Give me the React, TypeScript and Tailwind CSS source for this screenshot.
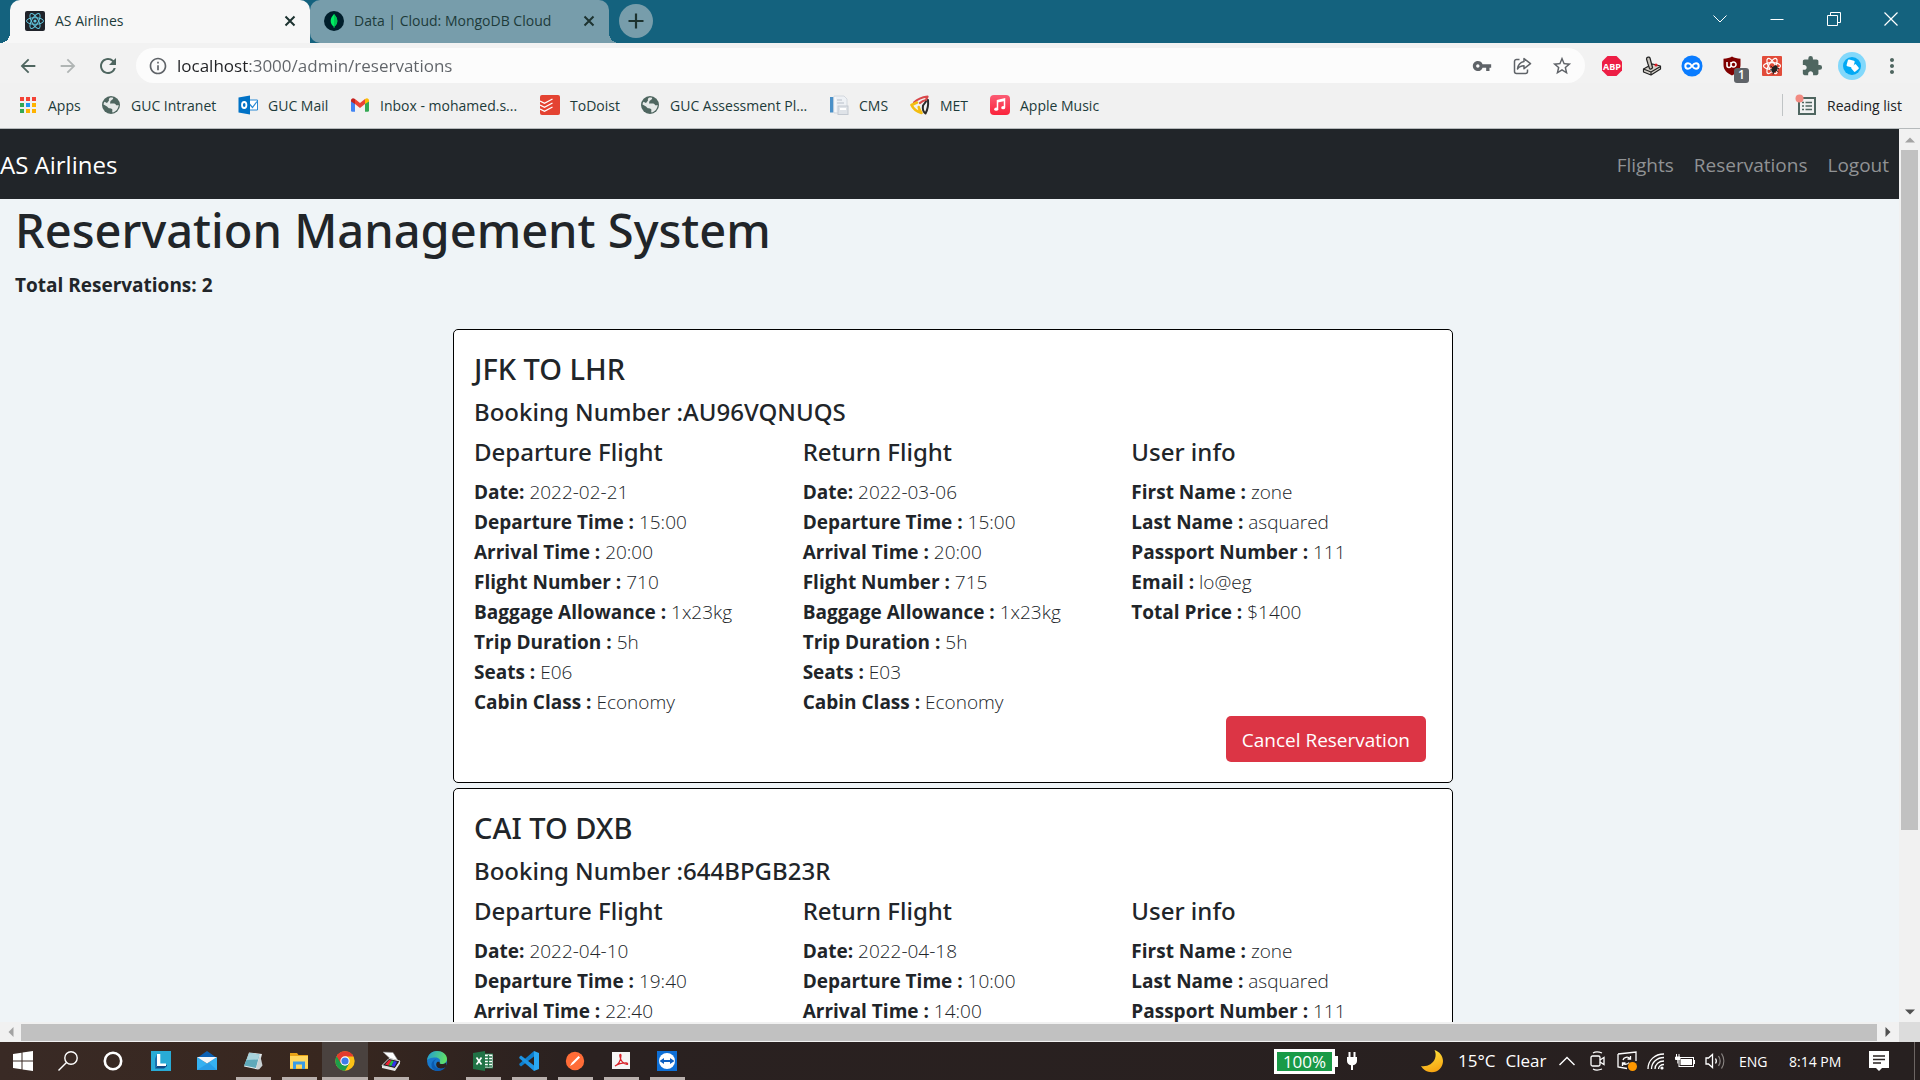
import React from "react";
import {
  MdArrowBack,
  MdArrowForward,
  MdRefresh,
  MdInfoOutline,
  MdVpnKey,
  MdStarBorder,
  MdExtension,
  MdMoreVert,
} from "react-icons/md";

type IconProps = { className?: string };

/* ---------- browser icons ---------- */

const ReactFavicon = () => (
  <svg viewBox="0 0 20 20" className="size-5 shrink-0">
    <rect width="20" height="20" rx="2" fill="#20232a" />
    <g fill="none" stroke="#61c5dd" strokeWidth="1">
      <ellipse cx="10" cy="10" rx="8.500" ry="3.300" />
      <ellipse cx="10" cy="10" rx="8.500" ry="3.300" transform="rotate(60 10 10)" />
      <ellipse cx="10" cy="10" rx="8.500" ry="3.300" transform="rotate(120 10 10)" />
    </g>
    <circle cx="10" cy="10" r="1.600" fill="#61c5dd" />
  </svg>
);

const MongoFavicon = () => (
  <svg viewBox="0 0 20 20" className="size-5 shrink-0">
    <circle cx="10" cy="10" r="10" fill="#001e2b" />
    <path d="M10 3c2 2.300 3.300 4.300 3.300 7 0 2.600-1.300 4.300-2.900 5.400L10.200 17h-.4l-.2-1.600C8 14.300 6.700 12.600 6.700 10 6.700 7.300 8 5.300 10 3z" fill="#00ed64" />
    <path d="M10 3v14h.2l.2-1.600c1.600-1.100 2.900-2.800 2.900-5.400 0-2.700-1.300-4.700-3.300-7z" fill="#00c853" />
  </svg>
);

const Cross = ({ className }: IconProps) => (
  <svg viewBox="0 0 12 12" className={className} fill="none" stroke="currentColor" strokeWidth="2">
    <path d="M1.500 1.500l9 9M10.500 1.500l-9 9" />
  </svg>
);

const ShareIcon = () => (
  <svg viewBox="0 0 20 20" className="size-5" fill="none" stroke="#5f6368" strokeWidth="1.500" strokeLinejoin="round">
    <path d="M7.500 3.500H4.500a2 2 0 0 0-2 2v10a2 2 0 0 0 2 2h9a2 2 0 0 0 2-2v-2" />
    <path d="M12 2.500l6.500 5.200-6.500 5V9.800c-3 0-5 1-6.500 3.200.5-4.200 2.500-6.700 6.500-7.500z" />
  </svg>
);

const AbpIcon = () => (
  <svg viewBox="0 0 22 22" className="size-[22px]">
    <path d="M6.500 1h9L21 6.500v9L15.500 21h-9L1 15.500v-9z" fill="#ed1e45" />
    <text x="11" y="14.500" textAnchor="middle" fontSize="9" fontWeight="700" fill="#fff" fontFamily="Open Sans, sans-serif">ABP</text>
  </svg>
);

const JoystickIcon = () => (
  <svg viewBox="0 0 20 20" className="size-5" stroke="#222" strokeWidth="1.200" strokeLinejoin="round">
    <path d="M1.500 13l9-5 8 2v3L9 19l-7.500-3z" fill="#d5d1ca" />
    <path d="M1.500 13l7.500 3 9.500-5.500M9 16v3" fill="none" />
    <path d="M7.500 12.500L6 8 4.500 3c0-2 3-2.500 3.500-1l2.500 9.500c-.5 1.500-2.500 2-3 1z" fill="#c9c5be" />
    <circle cx="14" cy="9" r="1.500" fill="#e01b24" stroke="none" />
  </svg>
);

const InfinityIcon = () => (
  <svg viewBox="0 0 22 22" className="size-[22px]" fill="none">
    <circle cx="11" cy="11" r="10.500" fill="#0a7cff" />
    <path d="M11 11c-1.500-2-2.500-2.700-4-2.700a2.700 2.700 0 0 0 0 5.400c1.500 0 2.500-.7 4-2.700s2.500-2.700 4-2.700a2.700 2.700 0 0 1 0 5.400c-1.500 0-2.500-.7-4-2.700z" stroke="#fff" strokeWidth="2" />
  </svg>
);

const ShieldIcon = () => (
  <svg viewBox="0 0 20 20" className="size-5">
    <path d="M10 0.500c2.500 1.500 5 2 8.500 2.200V9c0 5-3.500 8-8.500 10.500C5 17 1.500 14 1.500 9V2.700C5 2.500 7.500 2 10 .5z" fill="#800000" />
    <path d="M5 6v3.500a2 2 0 0 0 4 0V6M9 8.500a2.500 2.500 0 1 0 5 0 2.500 2.500 0 1 0-5 0z" fill="none" stroke="#fff" strokeWidth="1.600" />
  </svg>
);

const ReactBugIcon = () => (
  <svg viewBox="0 0 22 22" className="size-[22px]">
    <rect x="1" y="1" width="20" height="20" rx="1" fill="#e24c3a" />
    <g fill="none" stroke="#fff" strokeWidth="1.200">
      <ellipse cx="11" cy="11" rx="8.500" ry="3.300" />
      <ellipse cx="11" cy="11" rx="8.500" ry="3.300" transform="rotate(60 11 11)" />
      <ellipse cx="11" cy="11" rx="8.500" ry="3.300" transform="rotate(120 11 11)" />
    </g>
    <ellipse cx="13.500" cy="14" rx="2.500" ry="4" transform="rotate(30 13.500 14)" fill="#222" />
    <path d="M9.500 11l8 6M9 15l9-1.500M12 19.500l2.500-9" stroke="#222" strokeWidth="1" />
  </svg>
);

const AvatarIcon = () => (
  <svg viewBox="0 0 28 28" className="size-7">
    <circle cx="14" cy="14" r="14" fill="#82d8fb" />
    <circle cx="14" cy="14" r="9" fill="#03a9f4" />
    <rect x="9" y="8" width="7" height="7" rx="1" transform="rotate(15 12.500 12)" fill="#fff" />
    <rect x="14" y="13" width="6" height="6" rx="1" transform="rotate(-40 17 16)" fill="#fff" />
  </svg>
);

const AppsIcon = () => (
  <svg viewBox="0 0 20 20" className="size-5 shrink-0">
    {["#f44336", "#f44336", "#f44336", "#34a853", "#2196f3", "#ffb300", "#34a853", "#ffb300", "#ffb300"].map((c, i) => (
      <rect key={i} x={2 + (i % 3) * 6} y={2 + Math.floor(i / 3) * 6} width="4" height="4" fill={c} />
    ))}
  </svg>
);

const GlobeIcon = () => (
  <svg viewBox="0 0 20 20" className="size-5 shrink-0">
    <circle cx="10" cy="10" r="9" fill="#4f6660" />
    <path d="M9.500 2.500c2.500-.3 3 .5 2.500 1.500L9.500 6 9 8.500h4c1.500 0 1.500 1.500 3 2 1-.3 1.500-.5 1.700-.5-.2 3.500-2.700 7-6.200 7.500-.8-1 .5-2.500-.5-3.500-1.500-1-3 0-4-1.500S3.500 10 2.500 9.500c0-1 .5-2 1-2.800L6 8l2-2.500c-.5-1 0-2.500 1.500-3z" fill="#e6e9e8" />
  </svg>
);

const OutlookIcon = () => (
  <svg viewBox="0 0 20 20" className="size-5 shrink-0">
    <path d="M10 5h9.500v10H10z" fill="#fff" stroke="#2a8ad4" />
    <path d="M11.500 9l3 3.500 4.500-6" fill="none" stroke="#2a8ad4" strokeWidth="1.200" />
    <path d="M.5 2.500L12 .5v19L.5 17.500z" fill="#0072c6" />
    <ellipse cx="6.200" cy="10" rx="2.200" ry="3" fill="none" stroke="#fff" strokeWidth="1.800" />
  </svg>
);

const GmailIcon = () => (
  <svg viewBox="0 0 20 20" className="size-5 shrink-0">
    <path d="M1 6v9.500a1.300 1.300 0 0 0 1.300 1.300H5V8z" fill="#4285f4" />
    <path d="M19 6v9.500a1.300 1.300 0 0 1-1.300 1.300H15V8z" fill="#34a853" />
    <path d="M1 5.500c0-2 2-3 3.500-1.800L5 4v5L1 6.500z" fill="#c5221f" />
    <path d="M19 5.500c0-2-2-3-3.500-1.800L15 4v5l4-2.500z" fill="#fbbc04" />
    <path d="M5 4l5 4 5-4v5l-5 4-5-4z" fill="#ea4335" />
  </svg>
);

const TodoistIcon = () => (
  <svg viewBox="0 0 20 20" className="size-5 shrink-0">
    <rect width="20" height="20" rx="2" fill="#e44332" />
    <path d="M0 6l4.500 2.300L12.500 4M0 10l4.500 2.300L12.500 8M0 14l4.500 2.300L12.500 12" fill="none" stroke="#fff" strokeWidth="1.400" />
  </svg>
);

const CmsIcon = () => (
  <svg viewBox="0 0 20 20" className="size-5 shrink-0">
    <rect x="1" y="2" width="3.500" height="15.500" fill="#4a90c8" />
    <path d="M5 1h10l3 3v14H5z" fill="#eef1f5" stroke="#d3d8de" />
    <path d="M6 17V2" stroke="#fff" />
    <rect x="9" y="11" width="10" height="8.500" fill="#dfe3e8" stroke="#c3c9d1" />
    <path d="M8 5h5M8 8h7" stroke="#b8bfc9" />
    <path d="M11 14h6" stroke="#fff" strokeWidth="2" />
  </svg>
);

const MetIcon = () => (
  <svg viewBox="0 0 20 20" className="size-5 shrink-0" fill="none" strokeLinejoin="round" strokeLinecap="round">
    <path d="M4 7.500C7 4.500 10 2.500 17.500 1.500L16 5c-3 .5-4 1-6 3" stroke="#d9484a" strokeWidth="2.200" />
    <path d="M18 5c.5 5 0 9-2.500 13.500-2-1.500-3-5-2.500-8l3-4" stroke="#2a2a2a" strokeWidth="2" />
    <path d="M7 7.500L1.500 10c2 4.500 5 6.500 10 8-1.500-2-2.500-4-2.800-6" stroke="#f3bd10" strokeWidth="2.600" />
  </svg>
);

const MusicIcon = () => (
  <svg viewBox="0 0 20 20" className="size-5 shrink-0">
    <defs>
      <linearGradient id="music" x1="0" y1="0" x2="0" y2="1">
        <stop offset="0" stopColor="#fb5c74" />
        <stop offset="1" stopColor="#fa233b" />
      </linearGradient>
    </defs>
    <rect width="20" height="20" rx="4" fill="url(#music)" />
    <path d="M7.500 14V5.500l7-1.500v8.500" fill="none" stroke="#fff" strokeWidth="1.500" />
    <path d="M7.500 6.500l7-1.500" stroke="#fff" strokeWidth="2" />
    <ellipse cx="6.200" cy="14.200" rx="2" ry="1.600" fill="#fff" />
    <ellipse cx="13.200" cy="12.700" rx="2" ry="1.600" fill="#fff" />
  </svg>
);

const ReadingListIcon = () => (
  <svg viewBox="0 0 22 22" className="size-[22px]">
    <rect x="4" y="4" width="16" height="16" fill="none" stroke="#4f6660" strokeWidth="2" />
    <path d="M7 8.500h2M7 12h2M7 15.500h2M10.500 8.500H17M10.500 12H17M10.500 15.500H17" stroke="#4f6660" strokeWidth="1.600" />
    <circle cx="4.500" cy="4.500" r="4" fill="#f28b82" />
  </svg>
);

/* ---------- taskbar icons ---------- */

const StartIcon = () => (
  <svg viewBox="0 0 20 20" className="size-5" fill="#fff">
    <path d="M0 3l8.500-1.200v7.700H0zM9.500 1.600L20 0v9.500H9.500zM0 10.500h8.500v7.700L0 17zM9.500 10.500H20V20L9.500 18.400z" />
  </svg>
);

const SearchIcon = () => (
  <svg viewBox="0 0 20 20" className="size-5" fill="none" stroke="#fff" strokeWidth="1.400">
    <circle cx="13" cy="7" r="6.200" />
    <path d="M8.500 11.500L0.500 19.500" />
  </svg>
);

const CortanaIcon = () => (
  <svg viewBox="0 0 20 20" className="size-5" fill="none" stroke="#fff" strokeWidth="2.600">
    <circle cx="10" cy="10" r="8.200" />
  </svg>
);

const LIcon = () => (
  <svg viewBox="0 0 20 20" className="size-5">
    <rect width="20" height="20" fill="#29abd6" />
    <path d="M4 17.500l3-3.500h9v1L13 17.500z" fill="#124a86" />
    <path d="M6 3h3.300v9.500H15V15H6z" fill="#fff" />
    <path d="M4 17.500V8l2-5v12z" fill="#1b6fae" />
  </svg>
);

const MailIcon = () => (
  <svg viewBox="0 0 20 20" className="size-5">
    <path d="M0 7l10-7 10 7v3H0z" fill="#0a60b4" />
    <path d="M0 6l10 6.500L20 6v13H0z" fill="#35b1f1" />
    <path d="M0 19l12-7.200L20 19z" fill="#1f8fe0" opacity=".6" />
    <path d="M0 6h20l-10 6.500z" fill="#f4f7fa" />
  </svg>
);

const NotepadIcon = () => (
  <svg viewBox="0 0 20 20" className="size-5">
    <path d="M6 1.500l13 1.500-4 15.500-14-3z" fill="#e8eef0" />
    <path d="M6.500 2l10 1.500-3.500 13.500L1 14.500z" fill="#5fa9ba" />
    <path d="M6.500 2l10 1.500-1.500 5L3.500 9z" fill="#a9d3dc" />
    <path d="M17 3.500l2.500 11-3.500 4-3-1z" fill="#c9d1d4" />
  </svg>
);

const ExplorerIcon = () => (
  <svg viewBox="0 0 20 20" className="size-5">
    <path d="M1 2h7l1.500 2H19v14H1z" fill="#e8a317" />
    <path d="M1 5h18v12.500H1z" fill="#ffd75e" />
    <path d="M4 18v-7.500h12V18h-3v-4.500H7V18z" fill="#3a9be6" />
  </svg>
);

const ChromeIcon = () => (
  <svg viewBox="0 0 20 20" className="size-5">
    <circle cx="10" cy="10" r="9.700" fill="#fbc116" />
    <path d="M10 10L1.600 5.150A9.700 9.700 0 0 0 10 19.700l4.200-7.300z" fill="#1e9e4a" />
    <path d="M10 5.500h8.600A9.700 9.700 0 0 0 1.600 5.150L6 12.400z" fill="#e33b2e" />
    <circle cx="10" cy="10" r="4.700" fill="#fff" />
    <circle cx="10" cy="10" r="3.600" fill="#3e7bea" />
  </svg>
);

const ScannerIcon = () => (
  <svg viewBox="0 0 20 20" className="size-5">
    <path d="M2 1l10 .5 5 8-8-2z" fill="#fff" stroke="#888" strokeWidth=".6" />
    <path d="M1 14.500L8 7.500l11 2.500-5 7.500z" fill="#222" stroke="#ddd" strokeWidth="1" />
    <path d="M4 13.500L8 9l2.500.5-3 4.900z" fill="#e23" />
    <path d="M7.500 14.300l3-4.800 2.500.5-2.500 4.900z" fill="#2b4" />
    <path d="M10.500 14.900L13 10l3 .7-2.500 5z" fill="#33e" />
    <path d="M1 14.500l13 3 5-7.500v2.500L14 20 1 17z" fill="#e5e5e5" />
  </svg>
);

const EdgeIcon = () => (
  <svg viewBox="0 0 20 20" className="size-5">
    <defs>
      <linearGradient id="edge" x1="0" y1="0" x2="1" y2="0.200">
        <stop offset="0" stopColor="#1f9ad6" />
        <stop offset="1" stopColor="#5fe06a" />
      </linearGradient>
    </defs>
    <circle cx="10" cy="10" r="10" fill="#1878cc" />
    <path d="M0 9.500C.5 4 4.500 0 10 0c5.500 0 10 3.500 10 8 0 3.500-2.500 5-5 5-2 0-3-.8-2.200-1.800C14 9 12 6.500 8.500 6.500 4 6.500.5 8 0 9.500z" fill="url(#edge)" />
    <path d="M7 12c0 3.500 3.500 6 7.500 5.500 1.800-.2 3.500-1 4.300-2-1.500 2.800-4.300 4.500-8 4.500C7 20 4.500 17.500 4.500 14 4.500 10.500 7 8.500 9.500 8.500 8 9 7 10.300 7 12z" fill="#0c5bb0" />
    <path d="M12.800 11.200C12 12.200 13 13 15 13c1.500 0 3-.5 4-1.600L19 15.500c-1.300 1-3 2-5 2-4 0-5.500-3-4.500-5.500.5-1.200 2-1.500 3.300-.8z" fill="#2b2220" />
  </svg>
);

const ExcelIcon = () => (
  <svg viewBox="0 0 20 20" className="size-5">
    <rect x="9" y="3" width="11" height="14" fill="#fff" stroke="#217346" />
    <path d="M12 6h7M12 9h7M12 12h7M12 15h7M15.500 4v12" stroke="#217346" strokeWidth="1.300" />
    <path d="M0 2l12-2v20L0 18z" fill="#217346" />
    <path d="M3.500 6.500l5 7M8.500 6.500l-5 7" stroke="#fff" strokeWidth="1.700" />
  </svg>
);

const VsCodeIcon = () => (
  <svg viewBox="0 0 20 20" className="size-5">
    <path d="M15 0l5 2v16l-5 2z" fill="#2aa8f2" />
    <path d="M15 0v5.500L2 15.500.3 14v-1.300z" fill="#0e7fce" />
    <path d="M15 20v-5.500L2 4.500.3 6v1.300z" fill="#1e95e4" />
  </svg>
);

const PostmanIcon = () => (
  <svg viewBox="0 0 20 20" className="size-5">
    <circle cx="10" cy="10" r="9.200" fill="#ff6c37" />
    <path d="M5 15l2-3.500L13.500 5l1.500 1.500L8.500 13z" fill="#fff" />
  </svg>
);

const AcrobatIcon = () => (
  <svg viewBox="0 0 20 20" className="size-5">
    <rect x="1" y="1" width="18" height="17" fill="#f5f5f5" />
    <path d="M4 15c3-1 6-5 6-10.500 0-1.500-1.500-1.500-1.200.5C9.300 9 12 13 16 13.500c1.200 0 .8-1.700-1-1.700-4 0-8 1-11 3.200z" fill="none" stroke="#d8232a" strokeWidth="1.200" />
  </svg>
);

const TeamViewerIcon = () => (
  <svg viewBox="0 0 20 20" className="size-5">
    <rect width="20" height="20" fill="#0e6fd6" />
    <circle cx="10" cy="10" r="8" fill="#fff" />
    <path d="M2.500 10l4.500-3v2h6V7l4.500 3-4.500 3v-2H7v2z" fill="#0e5fc0" />
  </svg>
);

const PlugIcon = () => (
  <svg viewBox="0 0 12 20" className="h-5 w-3" fill="#fff">
    <path d="M2.500 1h2v5h3V1h2v5H11v4c0 2-1.500 4-4 4.300V19H5v-4.700C2.500 14 1 12 1 10V6h1.500z" />
  </svg>
);

const MoonIcon = () => (
  <svg viewBox="0 0 24 24" className="size-6">
    <defs>
      <linearGradient id="moon" x1="0.300" y1="0" x2="0.600" y2="1">
        <stop offset="0" stopColor="#ffe43d" />
        <stop offset="1" stopColor="#f7a311" />
      </linearGradient>
    </defs>
    <path d="M14.500 1c5 1.500 8.500 6 8.500 11a11.200 11.200 0 0 1-11.200 11.200C7 23.200 3 20.500 1 17c6 1 12-2 14-7.500 1-3 .8-6-.5-8.500z" fill="url(#moon)" />
  </svg>
);

const ChevronUp = () => (
  <svg viewBox="0 0 16 10" className="h-[10px] w-4" fill="none" stroke="#fff" strokeWidth="1.400">
    <path d="M.5 9L8 1.500 15.500 9" />
  </svg>
);

const MeetNowIcon = () => (
  <svg viewBox="0 0 18 20" className="h-5 w-[18px]" fill="none" stroke="#fff" strokeWidth="1.300">
    <rect x="2" y="5" width="9" height="10" rx="1.500" />
    <path d="M11 9l4-2.500v7L11 11M4 2c2-1.200 6-1.200 9 0M4 18c2 1.200 6 1.200 9 0" />
  </svg>
);

const UpdateIcon = () => (
  <svg viewBox="0 0 20 20" className="size-5" fill="none" stroke="#fff" strokeWidth="1.300">
    <path d="M1 3l18-2v9M1 3v13l9 1.500" />
    <path d="M6 9a4 3.500 0 0 1 7-1.500M13.500 5v3h-3M12 11.500a4 3.500 0 0 1-6 1M5.500 15v-3h3" />
    <circle cx="15.500" cy="15.500" r="4.500" fill="#ff9800" stroke="none" />
  </svg>
);

const WifiIcon = () => (
  <svg viewBox="0 0 18 18" className="size-[18px]" fill="none" stroke="#fff" strokeWidth="1.300">
    <path d="M1 17C1 8 8 2 17 2M4.500 17C4.500 10.500 10 5.500 17 5.500M8 17c0-4.500 4-8 9-8M11.500 17c0-2.500 2.500-4.500 5.500-4.500" />
    <circle cx="15" cy="16" r="1.600" fill="#fff" stroke="none" />
  </svg>
);

const BatteryIcon = () => (
  <svg viewBox="0 0 20 14" className="h-[14px] w-5">
    <rect x="4" y="3.500" width="14.500" height="9" fill="none" stroke="#fff" />
    <rect x="5.500" y="5" width="11.500" height="6" fill="#fff" />
    <rect x="18.500" y="6" width="1.500" height="4" fill="#fff" />
    <path d="M1.500 0v3M4 0v3M.5 3h4.500v2.500H.5zM2.800 5.500v4" fill="#fff" stroke="#fff" />
  </svg>
);

const SpeakerIcon = () => (
  <svg viewBox="0 0 20 18" className="h-[18px] w-5" fill="none" stroke="#fff" strokeWidth="1.300">
    <path d="M1 6h2.500L7.500 2.500v13L3.500 12H1z" />
    <path d="M10.500 6.500c1 1.500 1 3.500 0 5" />
    <path d="M13.500 4c2 3 2 7 0 10M16.500 1.500c3 4.500 3 10.500 0 15" stroke="#8a8583" />
  </svg>
);

const NotificationIcon = () => (
  <svg viewBox="0 0 20 20" className="size-5">
    <path d="M0 0h20v17h-7l-3 3-3-3H0z" fill="#fff" />
    <path d="M4 5h12M4 8.500h12M4 12h8" stroke="#2a2322" strokeWidth="1.300" />
  </svg>
);

/* ---------- browser chrome ---------- */

const TabStrip = () => (
  <div className="flex h-[43px] shrink-0 bg-[#14627e] pl-[10px] text-[14px] text-[#1d3b3a]">
    <div className="relative flex w-[300px] items-center rounded-t-[10px] bg-[#f7f7f7] pr-[12px] pb-[2px] pl-[15px] before:absolute before:bottom-0 before:-left-[10px] before:size-[10px] before:bg-[radial-gradient(circle_at_0_0,transparent_10px,#f7f7f7_10px)]">
      <ReactFavicon />
      <button className="ml-[10px] flex-1 text-left">AS Airlines</button>
      <button aria-label="Close AS Airlines" className="flex size-4 items-center justify-center">
        <Cross className="size-3 text-[#1d3330]" />
      </button>
    </div>
    <div className="relative flex w-[299px] items-center rounded-[10px] rounded-br-none bg-[#779dab] pr-[12px] pb-[2px] pl-[14px] after:absolute after:-right-[10px] after:bottom-0 after:size-[10px] after:bg-[radial-gradient(circle_at_100%_0,transparent_10px,#779dab_10px)]">
      <MongoFavicon />
      <button className="ml-[10px] flex-1 text-left">Data | Cloud: MongoDB Cloud</button>
      <button aria-label="Close Data | Cloud" className="flex size-4 items-center justify-center">
        <Cross className="size-3 text-[#1d3330]" />
      </button>
    </div>
    <button aria-label="New tab" className="mt-1 ml-[10px] flex size-[34px] items-center justify-center rounded-full bg-[#779dab]">
      <svg viewBox="0 0 16 16" className="size-4" stroke="#1d3330" strokeWidth="2.200">
        <path d="M8 .5v15M.5 8h15" />
      </svg>
    </button>
    <div className="ml-auto flex h-[37px] pr-[1px] text-white">
      <button aria-label="Search tabs" className="flex w-[57px] items-center justify-center">
        <svg viewBox="0 0 14 8" className="h-2 w-[14px]" fill="none" stroke="currentColor"><path d="M.5.5L7 7 13.500.5" /></svg>
      </button>
      <button aria-label="Minimize" className="flex w-[57px] items-center justify-center">
        <svg viewBox="0 0 14 14" className="size-[14px]" stroke="currentColor"><path d="M.5 7.500h13" /></svg>
      </button>
      <button aria-label="Restore" className="flex w-[57px] items-center justify-center">
        <svg viewBox="0 0 14 14" className="size-[14px]" fill="none" stroke="currentColor"><path d="M.5 3.500h10v10H.5zM3.500 3.500v-3h10v10h-3" /></svg>
      </button>
      <button aria-label="Close" className="flex w-[57px] items-center justify-center">
        <svg viewBox="0 0 14 14" className="size-[14px]" fill="none" stroke="currentColor" strokeWidth="1.200"><path d="M.5.5l13 13M13.500.5l-13 13" /></svg>
      </button>
    </div>
  </div>
);

const ToolButton = ({ label, children }: { label: string; children: React.ReactNode }) => (
  <button aria-label={label} className="flex w-10 shrink-0 items-center justify-center">
    {children}
  </button>
);

const Toolbar = () => (
  <div className="flex h-10 shrink-0 bg-[#f2f2f2] px-2 pt-[5px] text-[#4f6660]">
    <ToolButton label="Back"><MdArrowBack className="size-[22px]" /></ToolButton>
    <ToolButton label="Forward"><MdArrowForward className="size-[22px] text-[#b0b5b4]" /></ToolButton>
    <ToolButton label="Reload"><MdRefresh className="size-6" /></ToolButton>
    <div className="ml-2 flex h-[35px] flex-1 items-center rounded-full bg-[#fcfcfc] pr-[3px] pl-3 text-[#5f6368]">
      <MdInfoOutline className="size-5" />
      <input
        aria-label="Address"
        defaultValue="localhost:3000/admin/reservations"
        className="ml-[9px] flex-1 bg-[linear-gradient(to_right,#202124_72px,#5f6368_72px)] bg-clip-text text-[17px] text-transparent outline-none"
      />
      <ToolButton label="Saved passwords"><MdVpnKey className="size-5" /></ToolButton>
      <ToolButton label="Share"><ShareIcon /></ToolButton>
      <ToolButton label="Bookmark"><MdStarBorder className="size-[22px]" /></ToolButton>
    </div>
    <div className="ml-[7px] flex h-[35px]">
      <ToolButton label="Adblock Plus"><AbpIcon /></ToolButton>
      <ToolButton label="Joystick"><JoystickIcon /></ToolButton>
      <ToolButton label="Infinity"><InfinityIcon /></ToolButton>
      <ToolButton label="uBlock">
        <span className="relative">
          <ShieldIcon />
          <span className="absolute top-[12px] left-[12px] flex h-[15px] w-[15px] items-center justify-center rounded-[3px] bg-[#5f6368] text-[12px] font-semibold text-white">1</span>
        </span>
      </ToolButton>
      <ToolButton label="React tools"><ReactBugIcon /></ToolButton>
      <ToolButton label="Extensions"><MdExtension className="size-[22px]" /></ToolButton>
      <ToolButton label="Profile"><AvatarIcon /></ToolButton>
      <ToolButton label="Menu"><MdMoreVert className="size-6" /></ToolButton>
    </div>
  </div>
);

const bookmarks: { label: string; icon: React.ReactNode; width: string }[] = [
  { label: "Apps", icon: <AppsIcon />, width: "w-[83px]" },
  { label: "GUC Intranet", icon: <GlobeIcon />, width: "w-[137px]" },
  { label: "GUC Mail", icon: <OutlookIcon />, width: "w-[112px]" },
  { label: "Inbox - mohamed.s...", icon: <GmailIcon />, width: "w-[190px]" },
  { label: "ToDoist", icon: <TodoistIcon />, width: "w-[100px]" },
  { label: "GUC Assessment Pl...", icon: <GlobeIcon />, width: "w-[189px]" },
  { label: "CMS", icon: <CmsIcon />, width: "w-[81px]" },
  { label: "MET", icon: <MetIcon />, width: "w-[80px]" },
  { label: "Apple Music", icon: <MusicIcon />, width: "w-[120px]" },
];

const BookmarksBar = () => (
  <nav aria-label="Bookmarks" className="flex h-[46px] shrink-0 items-center border-b border-[#b5b9bb] bg-[#f1f1f1] pr-[18px] pb-[1px] pl-[18px] text-[14px] text-[#1d3b3a]">
    {bookmarks.map((b) => (
      <a key={b.label} href="#" className={`flex shrink-0 items-center gap-[10px] whitespace-nowrap ${b.width}`}>
        {b.icon}
        {b.label}
      </a>
    ))}
    <button className="ml-auto flex items-center gap-[10px] border-l border-[#c0c4c5] pl-3 text-[#202124]">
      <ReadingListIcon />
      Reading list
    </button>
  </nav>
);

/* ---------- page ---------- */

type Flight = { date: string; departure: string; arrival: string; number?: string; baggage?: string; duration?: string; seats?: string; cabin?: string };
type Reservation = {
  route: string;
  booking: string;
  outbound: Flight;
  inbound: Flight;
  user: { first: string; last: string; passport: string; email?: string; price?: string };
  cancellable?: boolean;
};

const reservations: Reservation[] = [
  {
    route: "JFK TO LHR",
    booking: "AU96VQNUQS",
    outbound: { date: "2022-02-21", departure: "15:00", arrival: "20:00", number: "710", baggage: "1x23kg", duration: "5h", seats: "E06", cabin: "Economy" },
    inbound: { date: "2022-03-06", departure: "15:00", arrival: "20:00", number: "715", baggage: "1x23kg", duration: "5h", seats: "E03", cabin: "Economy" },
    user: { first: "zone", last: "asquared", passport: "111", email: "lo@eg", price: "$1400" },
    cancellable: true,
  },
  {
    route: "CAI TO DXB",
    booking: "644BPGB23R",
    outbound: { date: "2022-04-10", departure: "19:40", arrival: "22:40" },
    inbound: { date: "2022-04-18", departure: "10:00", arrival: "14:00" },
    user: { first: "zone", last: "asquared", passport: "111" },
  },
];

type Row = [string, string | undefined];

const Details = ({ title, rows }: { title: string; rows: Row[] }) => (
  <div>
    <h4 className="mb-[10px] font-['Noto_Sans',sans-serif] text-[24px] leading-[30px] font-medium">{title}</h4>
    {rows
      .filter(([, value]) => value)
      .map(([label, value]) => (
        <p key={label} className="font-light">
          <b className="font-bold">{label}</b> {value}
        </p>
      ))}
  </div>
);

const flightRows = (f: Flight): Row[] => [
  ["Date:", f.date],
  ["Departure Time :", f.departure],
  ["Arrival Time :", f.arrival],
  ["Flight Number :", f.number],
  ["Baggage Allowance :", f.baggage],
  ["Trip Duration :", f.duration],
  ["Seats :", f.seats],
  ["Cabin Class :", f.cabin],
];

const ReservationCard = ({ r }: { r: Reservation }) => (
  <article className="w-full max-w-[1000px] rounded-[5px] border border-black bg-white px-5 pt-[21px] pb-[19px]">
    <h3 className="mb-[10px] font-['Noto_Sans',sans-serif] text-[29px] leading-9 font-medium">{r.route}</h3>
    <h4 className="mb-[10px] font-['Noto_Sans',sans-serif] text-[24px] leading-[30px] font-medium">Booking Number :{r.booking}</h4>
    <div className="-mr-7 grid grid-cols-3">
      <Details title="Departure Flight" rows={flightRows(r.outbound)} />
      <Details title="Return Flight" rows={flightRows(r.inbound)} />
      <Details
        title="User info"
        rows={[
          ["First Name :", r.user.first],
          ["Last Name :", r.user.last],
          ["Passport Number :", r.user.passport],
          ["Email :", r.user.email],
          ["Total Price :", r.user.price],
        ]}
      />
    </div>
    {r.cancellable && (
      <div className="-mt-[1px] flex justify-end pr-[6px] pb-[1px]">
        <button className="rounded-[5px] bg-[#dc3545] px-4 pt-[9px] pb-[7px] text-white">Cancel Reservation</button>
      </div>
    )}
  </article>
);

const Page = () => (
  <div className="flex min-w-0 flex-1 flex-col overflow-hidden bg-[#eff4f7] text-[19px] leading-[30px] text-[#212529]">
    <header className="flex h-[70px] shrink-0 items-center justify-between bg-[#212529] pt-[1px] pr-[10px]">
      <a href="#" className="text-[24px] text-white">AS Airlines</a>
      <nav className="flex gap-5 text-[#909294]">
        <a href="#">Flights</a>
        <a href="#">Reservations</a>
        <a href="#">Logout</a>
      </nav>
    </header>
    <main>
      <h1 className="mt-[1px] ml-[15px] font-['Noto_Sans',sans-serif] text-[47px] leading-[60px] font-medium">Reservation Management System</h1>
      <p className="mt-[10px] ml-[15px] font-bold">Total Reservations: 2</p>
      <div className="mt-[29px] flex flex-col items-center gap-[5px] pl-[7px]">
        {reservations.map((r) => (
          <ReservationCard key={r.booking} r={r} />
        ))}
      </div>
    </main>
  </div>
);

const Arrow = ({ d, dim }: { d: string; dim?: boolean }) => (
  <svg viewBox="0 0 10 10" className="size-[10px]" fill={dim ? "#a3a3a3" : "#505050"}>
    <path d={d} />
  </svg>
);

const VerticalScrollbar = () => (
  <div className="flex w-[21px] shrink-0 flex-col items-center bg-[#f1f1f1]">
    <button aria-label="Scroll up" className="flex h-[21px] items-center"><Arrow dim d="M0 7.500L5 2.500l5 5z" /></button>
    <div className="w-[17px] flex-[680] bg-[#c1c1c1]" />
    <div className="flex-[171]" />
    <button aria-label="Scroll down" className="flex h-[21px] items-center"><Arrow d="M0 2.500h10l-5 5z" /></button>
  </div>
);

const HorizontalScrollbar = () => (
  <div className="flex h-5 shrink-0 items-center bg-[#f1f1f1]">
    <button aria-label="Scroll left" className="flex w-[21px] justify-center"><Arrow dim d="M7.500 0v10l-5-5z" /></button>
    <div className="h-[17px] flex-1 bg-[#c1c1c1]" />
    <button aria-label="Scroll right" className="flex w-[22px] justify-center"><Arrow d="M2.500 0v10l5-5z" /></button>
    <div className="h-5 w-[21px] bg-[#dcdcdc]" />
  </div>
);

/* ---------- taskbar ---------- */

const apps: { name: string; icon: React.ReactNode; running?: boolean; active?: boolean }[] = [
  { name: "L", icon: <LIcon /> },
  { name: "Mail", icon: <MailIcon /> },
  { name: "Notepad", icon: <NotepadIcon />, running: true },
  { name: "Explorer", icon: <ExplorerIcon />, running: true },
  { name: "Chrome", icon: <ChromeIcon />, active: true },
  { name: "Scanner", icon: <ScannerIcon />, running: true },
  { name: "Edge", icon: <EdgeIcon /> },
  { name: "Excel", icon: <ExcelIcon />, running: true },
  { name: "VS Code", icon: <VsCodeIcon />, running: true },
  { name: "Postman", icon: <PostmanIcon />, running: true },
  { name: "Acrobat", icon: <AcrobatIcon />, running: true },
  { name: "TeamViewer", icon: <TeamViewerIcon />, running: true },
];

const Taskbar = () => (
  <footer className="flex h-[38px] shrink-0 items-stretch bg-[linear-gradient(to_right,#392a25,#38271f_17%,#2a2120_30%,#272020)] text-white">
    <button aria-label="Start" className="flex w-[45px] items-center justify-center"><StartIcon /></button>
    <button aria-label="Search" className="flex w-[45px] items-center justify-center"><SearchIcon /></button>
    <button aria-label="Cortana" className="flex w-[45px] items-center justify-center"><CortanaIcon /></button>
    <div className="ml-[3px] flex">
      {apps.map((a) => (
        <button
          key={a.name}
          aria-label={a.name}
          className={`flex w-[46px] flex-col items-center ${a.active ? "bg-[#4a423f]" : ""}`}
        >
          <span className="flex flex-1 items-center pt-[2px]">{a.icon}</span>
          <span className={`h-[3px] ${a.active ? "w-full bg-[#b9b0ad]" : a.running ? "w-[35px] bg-[#b9b0ad]" : "w-0"}`} />
        </button>
      ))}
    </div>
    <div className="ml-auto flex items-center text-[14px]">
      <span className="flex items-center">
        <span className="flex h-[25px] w-[61px] items-center justify-center border-[3px] border-white bg-[#199a47] text-[17px] leading-[19px]">100%</span>
        <span className="h-[11px] w-[3px] bg-white" />
      </span>
      <span className="ml-2"><PlugIcon /></span>
      <span className="ml-[62px]"><MoonIcon /></span>
      <span className="ml-[14px] flex w-[101px] gap-[10px] text-[17px]"><span>15°C</span><span>Clear</span></span>
      <button aria-label="Hidden icons"><ChevronUp /></button>
      <span className="ml-[14px] flex items-center gap-[10px]">
        <MeetNowIcon />
        <UpdateIcon />
        <WifiIcon />
        <BatteryIcon />
        <SpeakerIcon />
      </span>
      <span className="ml-[14px] w-[50px]">ENG</span>
      <span className="w-[80px] whitespace-nowrap">8:14 PM</span>
      <button aria-label="Notifications"><NotificationIcon /></button>
      <span className="ml-[25px] h-full w-[6px] border-l border-[#6c6563]" />
    </div>
  </footer>
);

export default function App() {
  return (
    <div className="flex h-screen flex-col overflow-hidden font-['Open_Sans',sans-serif]">
      <TabStrip />
      <Toolbar />
      <BookmarksBar />
      <div className="flex min-h-0 flex-1">
        <Page />
        <VerticalScrollbar />
      </div>
      <HorizontalScrollbar />
      <Taskbar />
    </div>
  );
}
